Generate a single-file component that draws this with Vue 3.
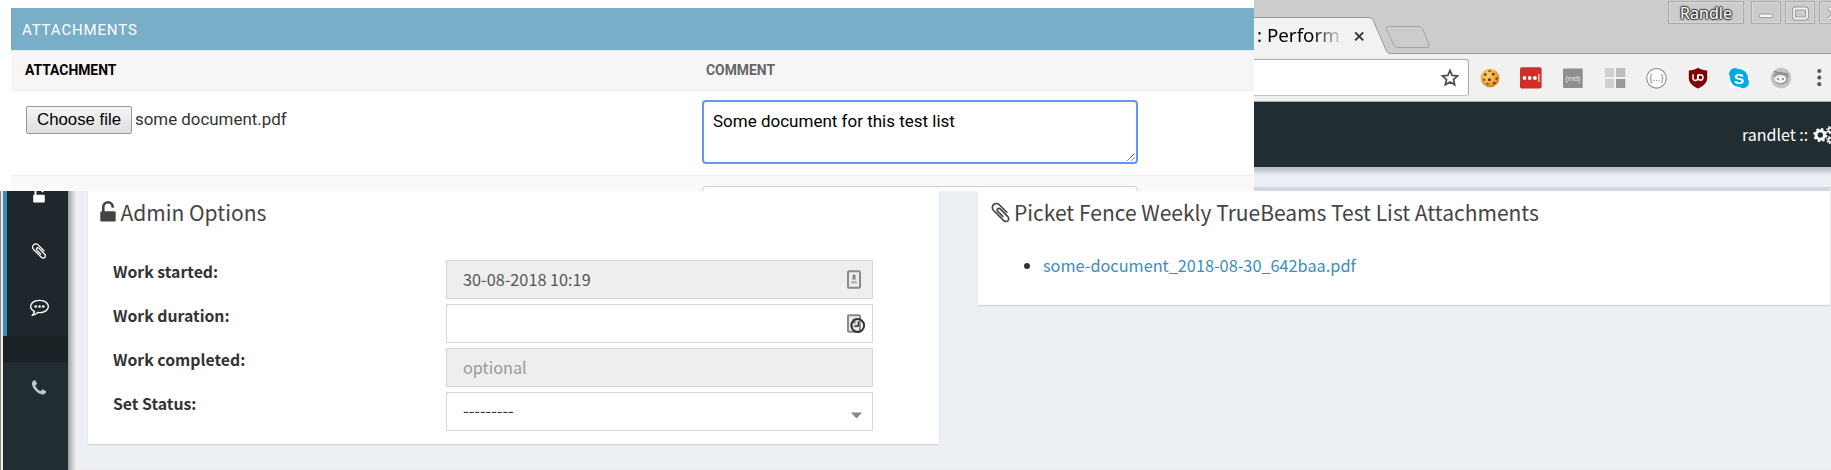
<script setup>
const icons = {
  unlock: 'M1376 768q40 0 68 28t28 68v576q0 40-28 68t-68 28h-960q-40 0-68-28t-28-68v-576q0-40 28-68t68-28h32v-320q0-185 131.5-316.5t316.5-131.5 316.5 131.5 131.5 316.5q0 26-19 45t-45 19h-64q-26 0-45-19t-19-45q0-106-75-181t-181-75-181 75-75 181v320h736z',
  clip: 'M1596 1385q0 117-79 196t-196 79q-135 0-235-100l-777-776q-113-115-113-271 0-159 110-270t269-111q158 0 273 113l605 606q10 10 10 22 0 16-30.5 46.5t-46.5 30.5q-13 0-23-10l-606-607q-79-77-181-77-106 0-179 75t-73 181q0 105 76 181l776 777q63 63 145 63 64 0 106-42t42-106q0-82-63-145l-581-581q-26-24-60-24-29 0-48 19t-19 48q0 32 25 59l410 410q10 10 10 22 0 16-31 47t-47 31q-12 0-22-10l-410-410q-63-61-63-149 0-82 57-139t139-57q88 0 149 63l581 581q100 98 100 235z',
  comment: 'M896 384q-204 0-381.5 69.5t-282 187.5-104.5 255q0 112 71.5 213.5t201.5 175.5l87 50-27 96q-24 91-70 172 152-63 275-171l43-38 57 6q69 8 130 8 204 0 381.5-69.5t282-187.5 104.5-255-104.5-255-282-187.5-381.5-69.5zm896 512q0 174-120 321.5t-326 233-450 85.5q-70 0-145-8-198 175-460 242-49 14-114 22h-5q-15 0-27-10.5t-16-27.5v-1q-3-4-.5-12t2-10 4.5-9.5l6-9 7-8.5 8-9q7-8 31-34.5t34.5-38 31-39.5 32.5-51 27-59 26-76q-157-89-247.5-220t-90.5-281q0-174 120-321.5t326-233 450-85.5 450 85.5 326 233 120 321.5z',
  phone: 'M1600 1240q0 27-10 70.5t-21 68.5q-21 50-122 106-94 51-186 51-27 0-53-3.5t-57.5-12.5-47-14.5-55.5-20.5-49-18q-98-35-175-83-127-79-264-216t-216-264q-48-77-83-175-3-9-18-49t-20.5-55.5-14.5-47-12.5-57.5-3.5-53q0-92 51-186 56-101 106-122 25-11 68.5-21t70.5-10q14 0 21 3 18 6 53 76 11 19 30 54t35 63.5 31 53.5q3 4 17.5 25t21.5 35.5 7 28.5q0 20-28.5 50t-62 55-62 53-28.5 46q0 9 5 22.5t8.5 20.5 14 24 11.5 19q76 137 174 235t235 174q2 1 19 11.5t24 14 20.5 8.5 22.5 5q18 0 46-28.5t53-62 55-62 50-28.5q14 0 28.5 7t35.5 21.5 25 17.5q25 15 53.5 31t63.5 35 54 30q70 35 76 53 3 7 3 21z'
}
const fields = [
  { label: 'Work started:', value: '30-08-2018 10:19', kind: 'disabled', card: true },
  { label: 'Work duration:', value: '', kind: '', card: true, clock: true },
  { label: 'Work completed:', value: 'optional', kind: 'disabled hint' },
  { label: 'Set Status:', value: '---------', kind: 'select', arrow: true }
]
</script>

<template>
  <div class="page">
    <div class="top">
      <section class="panel">
        <h2>ATTACHMENTS</h2>
        <div class="row head"><span class="c1">ATTACHMENT</span><span class="c2">COMMENT</span></div>
        <div class="row entry">
          <div class="c1 file"><span class="button">Choose file</span><span class="fname">some document.pdf</span></div>
          <div class="area focus">Some document for this test list
            <svg class="grip" width="8" height="8" viewBox="0 0 8 8"><path d="M.5 7.5l7-7M4.5 7.5l3-3" stroke="#333" fill="none" stroke-dasharray="1.2 .4" /></svg>
          </div>
        </div>
        <div class="row next"><div class="area"></div></div>
      </section>

      <section class="browser">
        <div class="tabs">
          <svg class="tabshape" width="200" height="54" viewBox="0 0 200 54">
            <path d="M0 17.5H115Q118 17.5 119 20L132 50Q133.500 53.500 136 53.500V54H0Z" fill="#f2f2f2" />
            <path d="M0 17.500H115Q118 17.500 119 20L132 50Q133.500 53.500 136 53.500H200" fill="none" stroke="#999" />
            <path d="M134.500 26.500H165Q167.500 26.500 168.500 28.500L175 44.500Q176 47.500 173 47.500H143.500Q141 47.500 140 45.500L132.500 29Q131.500 26.500 134.500 26.500Z" fill="#ccc" stroke="#a3a3a3" />
            <path d="M101.200 32.300l8 8M109.200 32.300l-8 8" stroke="#333" stroke-width="1.900" />
          </svg>
          <span class="tabtext">: Perform</span>
          <div class="winbar">
            <span class="wb name">Randle</span>
            <span class="wb"><svg width="28" height="21"><rect x="7" y="12" width="14" height="3.600" rx="1.800" fill="#f4f4f4" stroke="#999" /></svg></span>
            <span class="wb"><svg width="28" height="21"><rect x="8" y="6.500" width="13" height="10" rx="1.500" fill="none" stroke="#999" stroke-width="3.800" /><rect x="8" y="6.500" width="13" height="10" rx="1.500" fill="none" stroke="#f4f4f4" stroke-width="1.800" /></svg></span>
            <span class="wb"><svg width="28" height="21"><path d="M9 6l10 11M19 6L9 17" stroke="#999" stroke-width="4" /><path d="M9 6l10 11M19 6L9 17" stroke="#f4f4f4" stroke-width="2" /></svg></span>
          </div>
        </div>
        <div class="toolbar">
          <div class="omni">
            <svg width="20" height="20" viewBox="0 0 20 20"><path d="M10 2.400l2.100 5 5.500.5-4.100 3.600 1.200 5.300-4.700-2.800-4.700 2.800 1.200-5.300-4.100-3.600 5.500-.5z" fill="none" stroke="#4d4d4d" stroke-width="1.700" /></svg>
          </div>
          <svg class="ext" width="362" height="30" viewBox="1469 63 362 30">
            <defs><radialGradient id="ck" cx=".4" cy=".35" r=".7"><stop offset="0" stop-color="#ffd070" /><stop offset=".6" stop-color="#f0a840" /><stop offset="1" stop-color="#c87818" /></radialGradient></defs>
            <circle cx="1490" cy="78" r="9.300" fill="url(#ck)" />
            <g fill="#6b3a12"><rect x="1484" y="73.500" width="2.600" height="2" /><rect x="1488.500" y="70.500" width="2" height="1.500" /><rect x="1492" y="73" width="2.600" height="2.400" /><rect x="1488" y="78.500" width="2.800" height="2.400" /><rect x="1483" y="79" width="2" height="1.600" /><rect x="1495.500" y="77.500" width="2" height="2.200" /><rect x="1493" y="82" width="2.400" height="2" /><rect x="1486.500" y="83" width="2" height="1.400" /></g>
            <rect x="1520" y="67.300" width="21.600" height="21.300" rx="1.800" fill="#d32d27" />
            <g fill="#fff"><circle cx="1524.500" cy="78" r="1.900" /><circle cx="1529.700" cy="78" r="1.900" /><circle cx="1534.900" cy="78" r="1.900" /><rect x="1538.300" y="74" width="1.100" height="8" /></g>
            <rect x="1563" y="68.500" width="19.700" height="19.500" rx="1" fill="#8f8f8f" />
            <text x="1572.800" y="80.500" font-size="8" fill="#e6e6e6" text-anchor="middle" textLength="15">(md)</text>
            <rect x="1605" y="68" width="9" height="9" fill="#d0d0d0" /><rect x="1616" y="68" width="9.300" height="9" fill="#bdbdbd" /><rect x="1605" y="79" width="9" height="9" fill="#d0d0d0" /><rect x="1616" y="79" width="9.300" height="9" fill="#999" />
            <circle cx="1656.500" cy="78.300" r="9.800" fill="#fff" stroke="#8b8b8b" stroke-width="1.100" />
            <text x="1656.500" y="80.800" font-size="8.500" fill="#666" text-anchor="middle" textLength="14">{...}</text>
            <path d="M1698 67.700c3 2 6 2.700 9.200 2.700v7.600c0 5-3.500 7.800-9.200 10.500-5.700-2.700-9.200-5.500-9.200-10.500v-7.600c3.200 0 6.200-.7 9.200-2.700z" fill="#800000" />
            <path d="M1693 74.200v3.800a2.400 2.400 0 0 0 4.800 0v-3.800" fill="none" stroke="#fff" stroke-width="1.500" /><circle cx="1700.400" cy="77.400" r="2.600" fill="none" stroke="#fff" stroke-width="1.500" />
            <rect x="1729" y="68" width="20" height="20" fill="#fff" /><circle cx="1735" cy="73.800" r="5.900" fill="#00a8e6" /><circle cx="1743" cy="82.400" r="5.900" fill="#00a8e6" /><circle cx="1739" cy="78" r="9" fill="#00a8e6" />
            <text x="1739" y="83.600" font-size="15.500" font-weight="700" fill="#fff" text-anchor="middle">S</text>
            <circle cx="1781" cy="78" r="10.300" fill="#c4c4c4" /><path d="M1773 74.500q8-5.500 16 .5l-2 7q-6 5-12 0z" fill="#999" /><ellipse cx="1780.300" cy="79" rx="6" ry="4" fill="#f3f3f3" /><circle cx="1778" cy="79" r="1" fill="#777" /><circle cx="1783" cy="79" r="1" fill="#777" /><path d="M1774 71.500l7 2.200h7" stroke="#8c8c8c" stroke-width="1.600" fill="none" />
            <g fill="#555a60"><circle cx="1819.300" cy="71" r="2.100" /><circle cx="1819.300" cy="77.600" r="2.100" /><circle cx="1819.300" cy="84.200" r="2.100" /></g>
          </svg>
        </div>
        <header class="appbar">
          <span>randlet ::</span>
          <svg width="24" height="20" viewBox="0 0 24 20" fill="none" stroke="#fff">
            <circle cx="7.300" cy="10" r="4.200" stroke-width="3" /><circle cx="7.300" cy="10" r="6.100" stroke-width="1.900" stroke-dasharray="2.400 2.390" />
            <circle cx="17.500" cy="5" r="2.100" stroke-width="1.600" /><circle cx="17.500" cy="5" r="3.500" stroke-width="1.300" stroke-dasharray="1.400 1.350" />
            <circle cx="17.500" cy="15" r="2.100" stroke-width="1.600" /><circle cx="17.500" cy="15" r="3.500" stroke-width="1.300" stroke-dasharray="1.400 1.350" />
          </svg>
        </header>
        <div class="under"><div class="boxtop"></div></div>
      </section>
    </div>

    <div class="bottom">
      <nav class="side">
        <div class="group">
          <svg class="s1" width="18" height="18" viewBox="0 0 1792 1792"><path :d="icons.unlock" /></svg>
          <svg class="s2" width="18" height="18" viewBox="0 0 1792 1792"><path :d="icons.clip" /></svg>
          <svg class="s3" width="19" height="19" viewBox="0 0 1792 1792"><path :d="icons.comment" /><circle cx="540" cy="896" r="125" /><circle cx="896" cy="896" r="125" /><circle cx="1252" cy="896" r="125" /></svg>
        </div>
        <div class="gap"></div>
        <svg class="s4" width="18" height="18" viewBox="0 0 1792 1792"><path :d="icons.phone" /></svg>
      </nav>
      <main class="content">
        <section class="card admin">
          <h3><svg width="24" height="24" viewBox="0 0 1792 1792"><path :d="icons.unlock" /></svg>Admin Options</h3>
          <div class="fields">
            <div v-for="f in fields" :key="f.label" class="field">
              <label>{{ f.label }}</label>
              <div class="input" :class="f.kind">
                <span>{{ f.value }}</span>
                <svg v-if="f.card" class="fi" width="28" height="24" viewBox="0 0 28 24">
                  <rect x="3" y="3.200" width="12" height="16.500" rx="1" fill="#ececec" stroke="#8b8b8b" stroke-width="2" />
                  <circle cx="9" cy="8" r="1.500" fill="#777" /><path d="M7 11.500l.8-2.500h2.400l.8 2.500z" fill="#888" /><rect x="6.200" y="13" width="5.600" height="2.600" fill="#b5b5b5" />
                  <g v-if="f.clock" fill="none" stroke="#333"><circle cx="12.700" cy="13.500" r="6.400" stroke-width="2" /><path d="M13.300 9.500v4.500h-3.300" stroke-width="1.400" /></g>
                </svg>
                <svg v-if="f.arrow" class="arrow" width="11" height="7"><path d="M0 .5h11L5.500 6.500z" fill="#888" /></svg>
              </div>
            </div>
          </div>
        </section>
        <section class="card files">
          <h3><svg width="23" height="23" viewBox="0 0 1792 1792"><path :d="icons.clip" /></svg>Picket Fence Weekly TrueBeams Test List Attachments</h3>
          <div class="item"><i></i><a>some-document_2018-08-30_642baa.pdf</a></div>
        </section>
      </main>
    </div>
  </div>
</template>

<style>
body { background: #fff; overflow: hidden; }
</style>
<style scoped>
* { box-sizing: border-box; }
svg { display: block; flex: none; }
h2, h3 { margin: 0; font-weight: 400; }
.page { width: 1831px; height: 470px; overflow: hidden; font-family: "Noto Sans CJK SC", "Noto Sans", sans-serif; white-space: nowrap; }
.top { display: flex; height: 191px; overflow: hidden; }

.panel { width: 1254px; padding: 8px 0 0 11px; background: #fff; font-family: Roboto, sans-serif; }
.panel h2 { height: 42px; padding: 2px 0 0 11px; background: #79aec8; color: #fff; font-size: 15px; line-height: 40px; letter-spacing: .85px; }
.row { display: flex; }
.head { height: 41px; background: #f6f6f6; border-top: 1px solid #eee; border-bottom: 1px solid #eee; font-size: 13.9px; font-weight: 700; line-height: 38px; color: #666; }
.c1 { width: 691px; padding-left: 14px; color: #000; }
.c2 { padding-left: 4px; }
.entry { height: 85px; border-bottom: 1px solid #eee; padding-top: 9px; }
.file { display: flex; height: 28px; margin-top: 6px; line-height: 26px; padding-left: 15px; }
.button { width: 106px; height: 28px; border: 1px solid #999; border-radius: 2px; background: linear-gradient(#f6f6f6, #dedede); font: 16.8px/25px "Liberation Sans", Arial, sans-serif; text-align: center; }
.fname { margin-left: 3px; font-size: 16.9px; color: #333; }
.area { position: relative; width: 436px; height: 64px; background: #fff; border: 1px solid #ccc; border-radius: 4px; }
.focus { border: 2px solid #6297ee; padding: 9px 0 0 9px; line-height: 20px; font-size: 17px; color: #000; }
.grip { position: absolute; right: 1px; bottom: 1px; }
.next { height: 30px; padding: 10px 0 0 691px; background: #f9f9f9; }

.browser { width: 577px; display: flex; flex-direction: column; overflow: hidden; }
.tabs { position: relative; height: 54px; background: #ccc; border-bottom: 1px solid #999; flex: none; }
.tabshape { position: absolute; left: 0; top: 0; background: #ccc; }
.tabtext { position: absolute; left: 3px; top: 22px; font: 18.8px/27px "Noto Sans", sans-serif; color: transparent; background: linear-gradient(90deg, #000 66%, #ccc 100%); background-clip: text; }
.winbar { position: absolute; left: 414px; top: 1px; display: flex; gap: 4px; }
.wb { width: 30px; height: 23px; border: 1px solid #aaa; box-shadow: inset 0 0 0 1px #d8d8d8; flex: none; }
.name { width: 76px; margin-right: 3px; text-align: center; font: 16px/22px "Noto Sans", sans-serif; color: #fff; text-shadow: 1px 0 1px #333, -1px 0 1px #333, 0 1px 1px #333, 0 -1px 1px #333, 0 0 2px #333; }
.toolbar { display: flex; align-items: center; height: 48px; background: #f1f1f1; border-bottom: 1px solid #aaa; flex: none; }
.omni { width: 215px; height: 37px; margin-top: -1px; padding: 8px 0 0 186px; background: #fff; border: 1px solid #aaa; border-bottom-color: #c4c4c4; border-left: 0; border-radius: 0 3px 3px 0; }
.ext { font-family: "Liberation Sans", Arial, sans-serif; }
.appbar { display: flex; align-items: center; height: 65px; padding-left: 488px; background: #222d32; color: #fff; font-size: 16px; line-height: 24px; flex: none; }
.appbar span { margin-top: -1px; }
.appbar svg { margin-left: 5px; }
.under { height: 24px; padding: 20px 1px 0 0; background: linear-gradient(#bac0c8, #c4cad2 3px, #e4e9ee 7px, #ecf0f5 9px); flex: none; }
.boxtop { height: 4px; background: #d2d6de; }

.bottom { display: flex; height: 279px; }
.side { width: 68px; height: 279px; border-left: 1px solid #888; background: linear-gradient(90deg, #eee 2px, #222d32 2px); position: relative; z-index: 1; }
.side::after { content: ""; position: absolute; left: 67px; top: 0; width: 8px; height: 279px; background: linear-gradient(90deg, #9a9fa5, #c2c7cc 45%, #ecf0f5); }
.side svg { fill: #fff; }
.group { height: 145px; margin-left: 2px; border-left: 4px solid #3c8dbc; background: #1e282c; overflow: hidden; }
.s1 { margin: -4px 0 0 23px; }
.s2 { margin: 37px 0 0 23px; }
.s3 { margin: 37px 0 0 23px; }
.gap { height: 26px; margin-left: 2px; background: #1a2226; }
.side .s4 { margin: 17px 0 0 29px; fill: #b8c7ce; }
.content { flex: 1; display: flex; align-items: flex-start; gap: 39px; padding-left: 20px; background: #ecf0f5; border-bottom: 1px solid #eee; height: 279px; }
.card { background: #fff; box-shadow: 0 1px 1px rgba(0, 0, 0, .12); }
.admin { width: 851px; height: 253px; }
.files { width: 852px; height: 114px; }
.card h3 { display: flex; align-items: center; height: 43px; font-size: 21px; line-height: 43px; color: #444; }
.card h3 svg { fill: #444; }
.admin h3 { padding-left: 8px; }
.admin h3 svg { margin: 0 .5px 0 0; }
.files h3 { padding-left: 11px; }
.files h3 svg { margin-right: 2px; }
.fields { display: flex; flex-direction: column; gap: 5px; padding: 26px 66px 0 25px; }
.field { display: flex; justify-content: space-between; height: 39px; }
.field label { font-size: 15.8px; font-weight: 700; line-height: 24px; color: #333; }
.input { position: relative; width: 427px; height: 39px; padding-left: 16px; border: 1px solid #d2d6de; background: #fff; font-size: 16.25px; line-height: 36px; color: #555; }
.disabled { background: #eee; }
.hint { color: #999; }
.select { color: #333; line-height: 35px; }
.fi { position: absolute; left: 398px; top: 7px; }
.arrow { position: absolute; left: 404px; top: 19px; }
.item { display: flex; align-items: center; height: 24px; margin-top: 19px; padding-left: 46px; font-size: 16.3px; line-height: 24px; }
.item i { width: 6px; height: 6px; margin: 2px 13px 0 0; border-radius: 50%; background: #333; }
.item a { color: #3c8dbc; }
</style>
